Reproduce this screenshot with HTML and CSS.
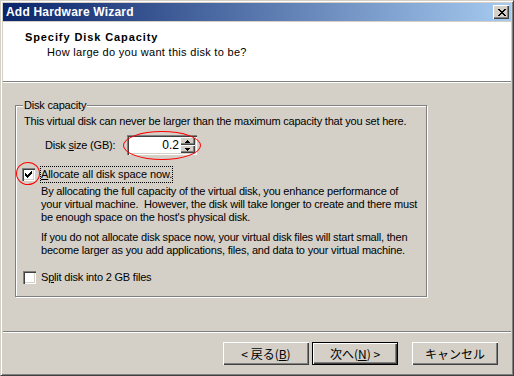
FILE: index.html
```html
<!DOCTYPE html>
<html lang="en">
<head>
    <meta charset="UTF-8">
    <title>Add Hardware Wizard</title>
    <link rel="stylesheet" href="styles.css">
</head>
<body>
    <div class="window">
        <div class="titlebar">
            <span class="title">Add Hardware Wizard</span>
            <span class="close-button">
                <svg width="8" height="7" viewBox="0 0 8 7">
                    <path d="M0 0h2v1h1v1h2V1h1V0h2v1H7v1H6v1H5v1h1v1h1v1h1v1H6V6H5V5H3v1H2v1H0V6h1V5h1V4h1V3H2V2H1V1H0z" fill="#000"/>
                </svg>
            </span>
        </div>

        <div class="client">
            <div class="header">
                <div class="header-title">Specify Disk Capacity</div>
                <div class="header-sub">How large do you want this disk to be?</div>
            </div>

            <div class="content">
                <fieldset class="group">
                    <legend>Disk capacity</legend>
                    <p class="intro">This virtual disk can never be larger than the maximum capacity that you set here.</p>

                    <div class="size-row">
                        <span class="size-label">Disk <u>s</u>ize (GB):</span>
                        <div class="spin">
                            <span class="spin-value">0.2</span>
                            <div class="spin-buttons">
                                <span class="spin-btn">
                                    <svg width="5" height="3" viewBox="0 0 5 3"><path d="M2 0h1v1h1v1h1v1H0V2h1V1h1z" fill="#000"/></svg>
                                </span>
                                <span class="spin-btn">
                                    <svg width="5" height="3" viewBox="0 0 5 3"><path d="M0 0h5v1H4v1H3v1H2V2H1V1H0z" fill="#000"/></svg>
                                </span>
                            </div>
                            <span class="ring ring-spin"></span>
                        </div>
                    </div>

                    <div class="check-row">
                        <span class="checkbox">
                            <svg width="7" height="7" viewBox="0 0 7 7"><path d="M6 0h1v3H6v1H5v1H4v1H3v1H2V6H1V5H0V2h1v1h1v1h1V3h1V2h1V1h1z" fill="#000"/></svg>
                            <span class="ring ring-check"></span>
                        </span>
                        <span class="check-label focused"><u>A</u>llocate all disk space now.</span>
                    </div>

                    <div class="note">
                        <p>By allocating the full capacity of the virtual disk, you enhance performance of<br>your virtual machine.&nbsp; However, the disk will take longer to create and there must<br>be enough space on the host's physical disk.</p>
                        <p>If you do not allocate disk space now, your virtual disk files will start small, then<br>become larger as you add applications, files, and data to your virtual machine.</p>
                    </div>

                    <div class="check-row split-row">
                        <span class="checkbox"></span>
                        <span class="check-label">S<u>p</u>lit disk into 2 GB files</span>
                    </div>
                </fieldset>
            </div>

            <div class="footer">
                <button class="button">&lt; 戻る(<u>B</u>)</button>
                <button class="button default">次へ(<u>N</u>) &gt;</button>
                <button class="button cancel">キャンセル</button>
            </div>
        </div>
    </div>
</body>
</html>
```

FILE: styles.css
```css
* {
    margin: 0;
    padding: 0;
    box-sizing: border-box;
}

body {
    font-family: "Liberation Sans", Arial, sans-serif;
    font-size: 11px;
    line-height: 13px;
    letter-spacing: -0.2px;
    color: #000;
    background: #d4d0c8;
}

.window {
    width: 514px;
    height: 376px;
    background: #d4d0c8;
    border: 1px solid;
    border-color: #d4d0c8 #404040 #404040 #d4d0c8;
    box-shadow: inset 1px 1px #fff, inset -1px -1px #808080;
    padding: 2px;
    display: flex;
    flex-direction: column;
}

/* title bar */
.titlebar {
    height: 18px;
    margin-bottom: 1px;
    background: linear-gradient(to right, #0a246a, #a6caf0);
    display: flex;
    align-items: center;
    justify-content: space-between;
    padding: 0 2px 0 3px;
}

.title {
    color: #fff;
    font-weight: bold;
    font-size: 12px;
    letter-spacing: 0.2px;
}

.close-button {
    width: 16px;
    height: 14px;
    background: #d4d0c8;
    box-shadow: inset 1px 1px #fff, inset -1px -1px #404040, inset -2px -2px #808080;
    display: flex;
    align-items: center;
    justify-content: center;
    padding-left: 1px;
}

/* client area */
.client {
    flex: 1;
    display: flex;
    flex-direction: column;
}

.header {
    height: 60px;
    background: #fff;
    border-bottom: 1px solid #808080;
    box-shadow: 0 1px #fff;
    padding: 9px 0 0 22px;
    margin-bottom: 1px;
}

.header-title {
    font-weight: bold;
    letter-spacing: 0.9px;
}

.header-sub {
    padding-left: 22px;
    margin-top: 2px;
    letter-spacing: 0.3px;
}

.content {
    height: 248px;
    padding: 16px 0 0 12px;
}

.group {
    width: 412px;
    border: 1px solid #808080;
    box-shadow: inset 1px 1px #fff, 1px 1px #fff;
    padding: 3px 8px 12px 8px;
    min-inline-size: 0;
}

.group legend {
    padding: 0 1px;
    margin-left: -1px;
    background: #d4d0c8;
}

.intro,
.note p {
    white-space: nowrap;
}

.size-row {
    display: flex;
    align-items: center;
    margin-top: 7px;
    padding-left: 21px;
}

.size-label {
    width: 82px;
}

.spin {
    position: relative;
    width: 70px;
    height: 20px;
    background: #fff;
    box-shadow: inset 1px 1px #808080, inset 2px 2px #404040, inset -1px -1px #fff, inset -2px -2px #d4d0c8;
    display: flex;
    align-items: center;
    justify-content: flex-end;
    padding: 2px;
}

.spin-value {
    font-size: 12px;
    letter-spacing: 0;
    padding-right: 1px;
}

.spin-buttons {
    width: 15px;
    height: 16px;
    display: flex;
    flex-direction: column;
}

.spin-btn {
    flex: 1;
    background: #d4d0c8;
    box-shadow: inset 1px 1px #fff, inset -1px -1px #404040, inset -2px -2px #808080;
    display: flex;
    align-items: center;
    justify-content: center;
}

.ring {
    position: absolute;
    border: 1px solid #ff0000;
    border-radius: 50%;
}

.ring-spin {
    left: -4px;
    top: -4px;
    width: 78px;
    height: 29px;
}

.ring-check {
    left: -6px;
    top: -6px;
    width: 24px;
    height: 23px;
}

.check-row {
    display: flex;
    align-items: center;
    margin-top: 11px;
    margin-left: -2px;
}

.checkbox {
    position: relative;
    width: 13px;
    height: 13px;
    background: #fff;
    box-shadow: inset 1px 1px #808080, inset 2px 2px #404040, inset -1px -1px #fff, inset -2px -2px #d4d0c8;
    display: flex;
    align-items: center;
    justify-content: center;
    margin-right: 5px;
}

.check-label {
    padding: 2px 1px;
}

.focused {
    outline: 1px dotted #000;
    outline-offset: -1px;
    letter-spacing: -0.1px;
}

.note {
    margin-top: 2px;
    padding-left: 17px;
}

.note p + p {
    margin-top: 7px;
}

.split-row {
    margin-top: 14px;
    margin-left: -1px;
}

.split-row .checkbox {
    margin-right: 4px;
}

.split-row .check-label {
    padding: 0 1px;
}

/* footer buttons */
.footer {
    flex: 1;
    border-top: 1px solid #808080;
    box-shadow: inset 0 1px #fff;
    display: flex;
    padding: 10px 0 0 220px;
}

.button {
    width: 86px;
    height: 23px;
    font-family: "Noto Sans CJK JP", "Liberation Sans", sans-serif;
    font-size: 12px;
    line-height: 14px;
    letter-spacing: 0;
    background: #d4d0c8;
    border: none;
    box-shadow: inset 1px 1px #fff, inset -1px -1px #404040, inset -2px -2px #808080;
    color: #000;
}

.button.default {
    margin-left: 3px;
    border: 1px solid #000;
}

.button.cancel {
    margin-left: 14px;
}
```
